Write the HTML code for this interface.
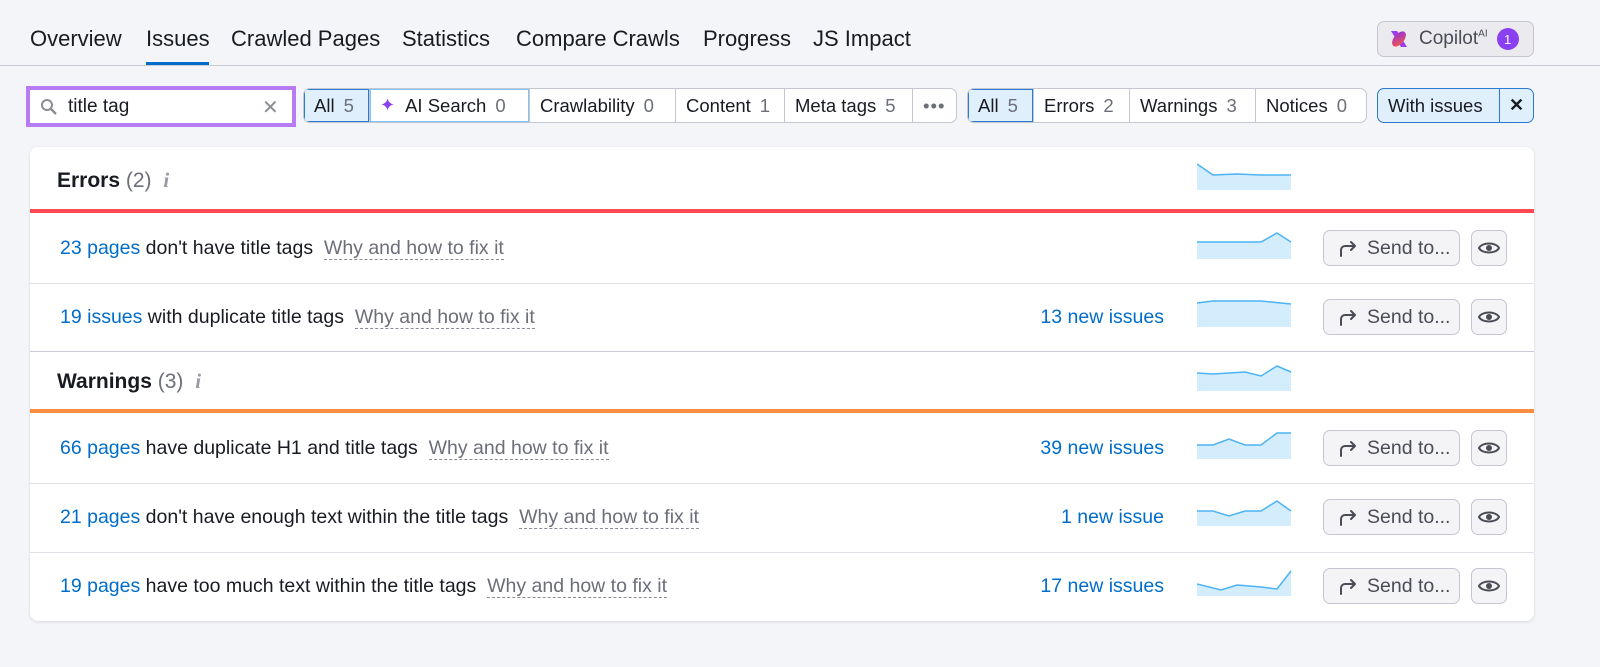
<!DOCTYPE html>
<html><head><meta charset="utf-8"><style>
*{box-sizing:border-box;margin:0;padding:0}
body{width:1600px;height:667px;background:#f4f5f9;font-family:"Liberation Sans",sans-serif;color:#191b23;position:relative;overflow:hidden}
.a{position:absolute;white-space:nowrap}
.tab{font-size:22px;top:26px}
.seg{position:absolute;top:88px;height:35px;display:flex;border:1px solid #c4c7cf;border-radius:7px;background:#fff;overflow:hidden}
.seg div{display:flex;align-items:center;padding:0 10px;font-size:18.5px;border-right:1px solid #c4c7cf;height:100%;flex:none}
.seg div:last-child{border-right:none}
.seg .n{color:#6c6e79;margin-left:9px}
.seg .on{background:#e0effc;box-shadow:inset 0 0 0 1px #2a7ad1}
.card{position:absolute;left:30px;top:147px;width:1504px;height:474px;background:#fff;border-radius:8px;box-shadow:0 1px 3px rgba(0,0,0,.12)}
.t{font-size:19.5px}
.lk{color:#006dca}
.why{color:#6c6e79;border-bottom:1px dashed #8b8d96}
.btn{position:absolute;left:1323px;width:137px;height:36px;border:1px solid #c4c7cf;border-radius:7px;background:#f4f4f6;font-size:19.5px;color:#4a4c56;display:flex;align-items:center;padding-left:14px;gap:9px}
.eye{position:absolute;left:1471px;width:36px;height:36px;border:1px solid #c4c7cf;border-radius:7px;background:#f4f4f6;display:flex;align-items:center;justify-content:center}
.sep{position:absolute;left:30px;width:1504px;height:1px;background:#e0e1e6}
.sp{position:absolute;left:1197px}
</style></head><body>
<div class="a tab" style="left:30px">Overview</div>
<div class="a tab" style="left:146px">Issues</div>
<div class="a" style="left:146px;top:62px;width:63px;height:3px;background:#006dca"></div>
<div class="a tab" style="left:231px">Crawled Pages</div>
<div class="a tab" style="left:402px">Statistics</div>
<div class="a tab" style="left:516px">Compare Crawls</div>
<div class="a tab" style="left:703px">Progress</div>
<div class="a tab" style="left:813px">JS Impact</div>
<div class="a" style="left:0;top:65px;width:1600px;height:1px;background:#c9ccd6"></div>
<div class="a" style="left:1377px;top:21px;width:157px;height:36px;border:1px solid #c4c7cf;border-radius:7px;background:#ebebef;display:flex;align-items:center;padding-left:10px;font-size:19px;color:#4a4c56">
<svg width="22" height="22" viewBox="0 0 22 22"><defs><linearGradient id="g" x1="0" y1="0" x2="1" y2="1"><stop offset="0" stop-color="#8e2ee8"/><stop offset="1" stop-color="#ff5a3c"/></linearGradient></defs><path d="M3 3h6l10 16h-6z" fill="#9a3ef0"/><ellipse cx="11" cy="11" rx="5" ry="9" transform="rotate(40 11 11)" fill="url(#g)"/></svg>
<span style="margin-left:9px">Copilot<sup style="font-size:10px">AI</sup></span>
<span style="margin-left:9px;width:22px;height:22px;border-radius:50%;background:#8a3ff0;color:#fff;font-size:13px;display:flex;align-items:center;justify-content:center">1</span></div>

<div class="a" style="left:26px;top:86px;width:270px;height:41px;background:#b77cf5;padding:4px"><div style="background:#fff;height:100%;display:flex;align-items:center;padding-left:10px;font-size:19px;position:relative">
<svg width="18" height="18" viewBox="0 0 18 18"><circle cx="7" cy="7" r="5" fill="none" stroke="#8b8d96" stroke-width="2"/><path d="M11 11l5 5" stroke="#8b8d96" stroke-width="2.5"/></svg>
<span style="margin-left:10px">title tag</span><span style="position:absolute;left:232px;top:5px;color:#8b8d96;font-size:20px">✕</span></div></div>

<div class="seg" style="left:303px;width:654px">
<div class="on" style="width:66px">All<span class="n">5</span></div>
<div style="width:160px;box-shadow:inset 0 0 0 1px #7fc4f5"><span style="color:#8a3ff0;font-size:18px;margin-right:10px">✦</span>AI Search<span class="n">0</span></div>
<div style="width:146px">Crawlability<span class="n">0</span></div>
<div style="width:109px">Content<span class="n">1</span></div>
<div style="width:128px">Meta tags<span class="n">5</span></div>
<div style="color:#6c6e79;letter-spacing:1px">•••</div>
</div>
<div class="seg" style="left:967px;width:400px">
<div class="on" style="width:66px">All<span class="n">5</span></div>
<div style="width:96px">Errors<span class="n">2</span></div>
<div style="width:126px">Warnings<span class="n">3</span></div>
<div>Notices<span class="n">0</span></div>
</div>
<div class="seg" style="left:1377px;width:157px;border-color:#2a7ad1;background:#e0effc">
<div style="border-color:#2a7ad1;width:122px">With issues</div><div style="font-weight:bold;font-size:18px;padding:0 9px">✕</div></div>

<div class="card"></div>
<div class="a" style="left:57px;top:168px;font-size:21px;font-weight:bold">Errors <span style="font-weight:normal;color:#6c6e79">(2)</span> <span style="color:#9a9ca5;font-style:italic;font-family:'Liberation Serif';margin-left:6px">i</span></div>
<div class="a" style="left:30px;top:209px;width:1504px;height:4px;background:#ff4953"></div>
<div class="a" style="left:57px;top:369px;font-size:21px;font-weight:bold">Warnings <span style="font-weight:normal;color:#6c6e79">(3)</span> <span style="color:#9a9ca5;font-style:italic;font-family:'Liberation Serif';margin-left:6px">i</span></div>
<div class="a" style="left:30px;top:409px;width:1504px;height:4px;background:#ff8c43"></div>
<div class="sep" style="top:283px"></div>
<div class="sep" style="top:351px;background:#c9ccd6"></div>
<div class="sep" style="top:483px"></div>
<div class="sep" style="top:552px"></div>

<div class="a t" style="left:60px;top:237px"><span class="lk">23 pages</span> don't have title tags &nbsp;<span class="why">Why and how to fix it</span></div>
<div class="a t" style="left:60px;top:306px"><span class="lk">19 issues</span> with duplicate title tags &nbsp;<span class="why">Why and how to fix it</span></div>
<div class="a t lk" style="right:436px;top:306px">13 new issues</div>
<div class="a t" style="left:60px;top:437px"><span class="lk">66 pages</span> have duplicate H1 and title tags &nbsp;<span class="why">Why and how to fix it</span></div>
<div class="a t lk" style="right:436px;top:437px">39 new issues</div>
<div class="a t" style="left:60px;top:506px"><span class="lk">21 pages</span> don't have enough text within the title tags &nbsp;<span class="why">Why and how to fix it</span></div>
<div class="a t lk" style="right:436px;top:506px">1 new issue</div>
<div class="a t" style="left:60px;top:575px"><span class="lk">19 pages</span> have too much text within the title tags &nbsp;<span class="why">Why and how to fix it</span></div>
<div class="a t lk" style="right:436px;top:575px">17 new issues</div>

<svg class="sp" style="top:163px" width="95" height="27"><path d="M0 1L16 12L40 11L64 12L94 12V27H0Z" fill="#d4edfc"/><path d="M0 1L16 12L40 11L64 12L94 12" fill="none" stroke="#4cb3f5" stroke-width="1.5"/></svg>
<svg class="sp" style="top:232px" width="95" height="27"><path d="M0 10L64 10L80 1L94 10V27H0Z" fill="#d4edfc"/><path d="M0 10L64 10L80 1L94 10" fill="none" stroke="#4cb3f5" stroke-width="1.5"/></svg>
<svg class="sp" style="top:300px" width="95" height="27"><path d="M0 3L16 1L64 1L94 4V27H0Z" fill="#d4edfc"/><path d="M0 3L16 1L64 1L94 4" fill="none" stroke="#4cb3f5" stroke-width="1.5"/></svg>
<svg class="sp" style="top:364px" width="95" height="27"><path d="M0 9L16 10L48 8L64 12L80 2L94 8V27H0Z" fill="#d4edfc"/><path d="M0 9L16 10L48 8L64 12L80 2L94 8" fill="none" stroke="#4cb3f5" stroke-width="1.5"/></svg>
<svg class="sp" style="top:432px" width="95" height="27"><path d="M0 13L16 13L32 7L48 13L64 13L80 1L94 1V27H0Z" fill="#d4edfc"/><path d="M0 13L16 13L32 7L48 13L64 13L80 1L94 1" fill="none" stroke="#4cb3f5" stroke-width="1.5"/></svg>
<svg class="sp" style="top:499px" width="95" height="27"><path d="M0 12L16 12L32 17L48 12L64 12L80 2L94 12V27H0Z" fill="#d4edfc"/><path d="M0 12L16 12L32 17L48 12L64 12L80 2L94 12" fill="none" stroke="#4cb3f5" stroke-width="1.5"/></svg>
<svg class="sp" style="top:569px" width="95" height="27"><path d="M0 15L24 21L40 16L64 18L80 20L94 2V27H0Z" fill="#d4edfc"/><path d="M0 15L24 21L40 16L64 18L80 20L94 2" fill="none" stroke="#4cb3f5" stroke-width="1.5"/></svg>

<div class="btn" style="top:230px"><svg width="20" height="20" viewBox="0 0 20 20"><path d="M3 18V12a4 4 0 0 1 4-4h10M13 4l4 4-4 4" fill="none" stroke="#4a4c56" stroke-width="2" stroke-linecap="round" stroke-linejoin="round"/></svg>Send to...</div>
<div class="btn" style="top:299px"><svg width="20" height="20" viewBox="0 0 20 20"><path d="M3 18V12a4 4 0 0 1 4-4h10M13 4l4 4-4 4" fill="none" stroke="#4a4c56" stroke-width="2" stroke-linecap="round" stroke-linejoin="round"/></svg>Send to...</div>
<div class="btn" style="top:430px"><svg width="20" height="20" viewBox="0 0 20 20"><path d="M3 18V12a4 4 0 0 1 4-4h10M13 4l4 4-4 4" fill="none" stroke="#4a4c56" stroke-width="2" stroke-linecap="round" stroke-linejoin="round"/></svg>Send to...</div>
<div class="btn" style="top:499px"><svg width="20" height="20" viewBox="0 0 20 20"><path d="M3 18V12a4 4 0 0 1 4-4h10M13 4l4 4-4 4" fill="none" stroke="#4a4c56" stroke-width="2" stroke-linecap="round" stroke-linejoin="round"/></svg>Send to...</div>
<div class="btn" style="top:568px"><svg width="20" height="20" viewBox="0 0 20 20"><path d="M3 18V12a4 4 0 0 1 4-4h10M13 4l4 4-4 4" fill="none" stroke="#4a4c56" stroke-width="2" stroke-linecap="round" stroke-linejoin="round"/></svg>Send to...</div>

<div class="eye" style="top:230px"><svg width="22" height="16" viewBox="0 0 22 16"><path d="M1 8C4 2 18 2 21 8C18 14 4 14 1 8Z" fill="none" stroke="#4a4c56" stroke-width="2"/><circle cx="11" cy="8" r="3" fill="#4a4c56"/></svg></div>
<div class="eye" style="top:299px"><svg width="22" height="16" viewBox="0 0 22 16"><path d="M1 8C4 2 18 2 21 8C18 14 4 14 1 8Z" fill="none" stroke="#4a4c56" stroke-width="2"/><circle cx="11" cy="8" r="3" fill="#4a4c56"/></svg></div>
<div class="eye" style="top:430px"><svg width="22" height="16" viewBox="0 0 22 16"><path d="M1 8C4 2 18 2 21 8C18 14 4 14 1 8Z" fill="none" stroke="#4a4c56" stroke-width="2"/><circle cx="11" cy="8" r="3" fill="#4a4c56"/></svg></div>
<div class="eye" style="top:499px"><svg width="22" height="16" viewBox="0 0 22 16"><path d="M1 8C4 2 18 2 21 8C18 14 4 14 1 8Z" fill="none" stroke="#4a4c56" stroke-width="2"/><circle cx="11" cy="8" r="3" fill="#4a4c56"/></svg></div>
<div class="eye" style="top:568px"><svg width="22" height="16" viewBox="0 0 22 16"><path d="M1 8C4 2 18 2 21 8C18 14 4 14 1 8Z" fill="none" stroke="#4a4c56" stroke-width="2"/><circle cx="11" cy="8" r="3" fill="#4a4c56"/></svg></div>
</body></html>
